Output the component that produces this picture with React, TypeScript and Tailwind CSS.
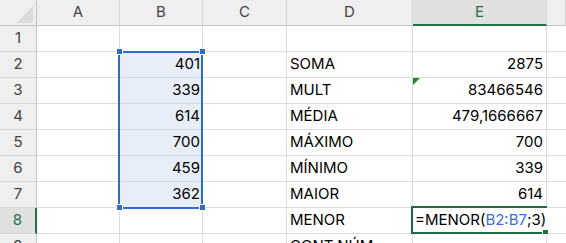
import React from 'react';

const cols = ['A', 'B', 'C', 'D', 'E', 'F'];
const colW = ['w-[83px]', 'w-[83px]', 'w-[84px]', 'w-[126px]', 'w-[134px]', 'flex-1'];

type Row = { b?: string; d?: string; e?: string };

const rows: Row[] = [
  {},
  { b: '401', d: 'SOMA', e: '2875' },
  { b: '339', d: 'MULT', e: '83466546' },
  { b: '614', d: 'MÉDIA', e: '479,1666667' },
  { b: '700', d: 'MÁXIMO', e: '700' },
  { b: '459', d: 'MÍNIMO', e: '339' },
  { b: '362', d: 'MAIOR', e: '614' },
  { d: 'MENOR' },
  { d: 'CONT.NÚM.' },
];

function Handle({ className }: { className: string }) {
  return <div className={`absolute w-[7px] h-[7px] bg-[#2f6bc8] border border-white ${className}`} />;
}

export default function App() {
  return (
    <div className="w-[566px] h-[243px] overflow-hidden bg-white font-['Inter',sans-serif] text-[15px] text-black">
      <div className="relative">
        {/* column headers; F sits mostly off-screen so its letter is not shown */}
        <div className="flex h-[26px] bg-[#efefef]">
          <div className="relative w-[37px] shrink-0 border-r border-b border-[#c4c4c4]">
            <svg className="absolute left-[16px] top-[6px]" width="17" height="17" viewBox="0 0 17 17">
              <polygon points="0,17 17,0 17,17" fill="#dbdbdb" />
            </svg>
          </div>
          {cols.map((c, i) => (
            <div
              key={c}
              className={`${colW[i]} shrink-0 flex items-center justify-center border-r border-r-[#d6d6d6] ${
                c === 'E'
                  ? 'bg-[#e0e0e0] border-b-2 border-b-[#217346] text-[#1e7145]'
                  : 'border-b border-b-[#c4c4c4] text-[#444]'
              }`}
            >
              {c === 'F' ? '' : c}
            </div>
          ))}
        </div>

        {rows.map((r, i) => {
          const n = i + 1;
          const inSel = n >= 2 && n <= 7;
          return (
            <div key={n} className="flex h-[26px]">
              <div
                className={`w-[37px] shrink-0 flex items-center justify-center border-b border-b-[#d6d6d6] ${
                  n === 8
                    ? 'bg-[#e0e0e0] border-r-2 border-r-[#217346] text-[#1e7145]'
                    : 'bg-[#efefef] border-r border-r-[#c4c4c4] text-[#444]'
                }`}
              >
                {n}
              </div>
              <div className="w-[83px] shrink-0 border-r border-b border-[#dcdcdc]" />
              <div
                className={`w-[83px] shrink-0 flex items-center justify-end pr-[2px] border-r border-b ${
                  inSel ? 'bg-[#e8eef8] border-[#d2d8e2]' : 'border-[#dcdcdc]'
                }`}
              >
                {r.b}
              </div>
              <div className="w-[84px] shrink-0 border-r border-b border-[#dcdcdc]" />
              <div className="w-[126px] shrink-0 flex items-center pl-[3px] border-r border-b border-[#dcdcdc]">
                {r.d}
              </div>
              <div className="relative w-[134px] shrink-0 flex items-center justify-end pr-[3px] border-r border-b border-[#dcdcdc]">
                {n === 3 && (
                  <svg className="absolute left-0 top-0" width="7" height="7" viewBox="0 0 7 7">
                    <polygon points="0,0 7,0 0,7" fill="#1f8a1f" />
                  </svg>
                )}
                {r.e}
              </div>
              <div className="flex-1 border-b border-[#dcdcdc]" />
            </div>
          );
        })}

        {/* selection B2:B7 */}
        <div className="absolute left-[118px] top-[51px] w-[85px] h-[158px] border-2 border-[#2f6bc8] pointer-events-none" />
        <Handle className="left-[116px] top-[48px]" />
        <Handle className="left-[199px] top-[48px]" />
        <Handle className="left-[116px] top-[204px]" />
        <Handle className="left-[199px] top-[204px]" />

        {/* editing E8 */}
        <div className="absolute left-[411px] top-[206px] w-[136px] h-[28px] border-2 border-r-0 border-[#1d6b41] bg-white flex items-center pl-[2px] whitespace-nowrap">
          <span>=MENOR(</span>
          <span className="text-[#3a6fd2]">B2:B7</span>
          <span>;3)</span>
        </div>
        <div className="absolute left-[542px] top-[229px] w-[7px] h-[6px] bg-[#1d6b41] border border-white" />
      </div>
    </div>
  );
}
